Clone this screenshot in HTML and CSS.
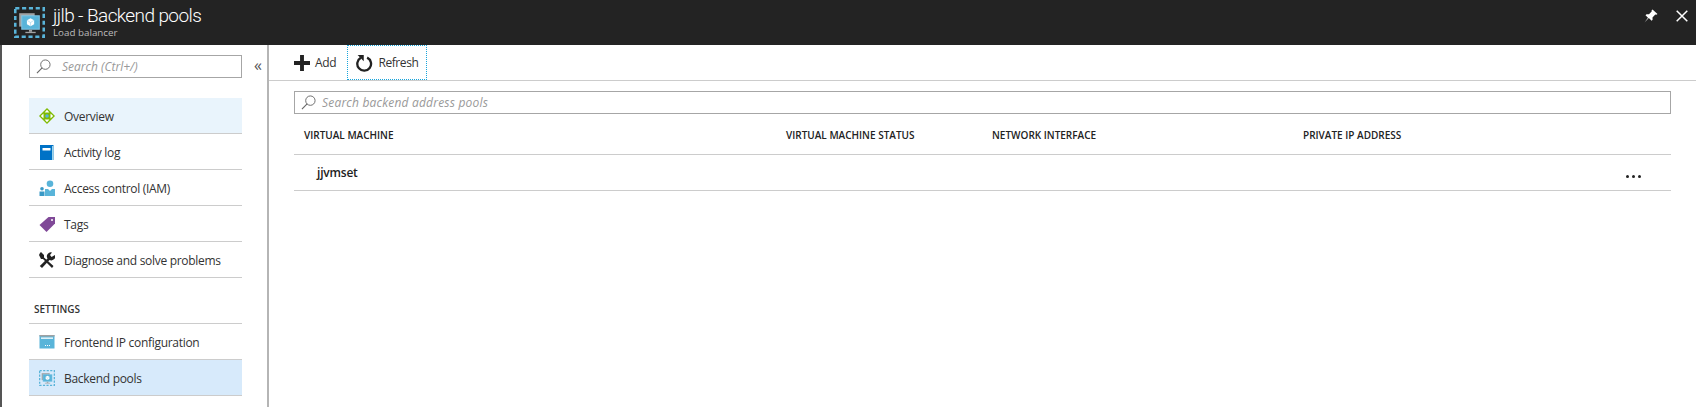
FILE: index.html
```html
<!DOCTYPE html>
<html lang="en">
<head>
    <meta charset="UTF-8">
    <title>jjlb - Backend pools</title>
    <link rel="stylesheet" href="styles.css">
</head>
<body>
    <svg class="defs" width="0" height="0">
        <symbol id="lb-icon" viewBox="0 0 30 30">
            <rect x="1.200" y="1.200" width="27.600" height="27.600" fill="none" stroke="#59b4d9" stroke-width="2.500" stroke-dasharray="4 2.600"/>
            <rect x="5" y="6" width="15" height="13" fill="#a0a1a2"/>
            <rect x="7" y="8" width="18" height="14" fill="#7fc6e6"/>
            <rect x="8" y="9" width="16" height="12" fill="#59b4d9"/>
            <path d="M16 11l3.500 1.800v4L16 18.700l-3.500-1.900v-4z" fill="#fff"/>
            <path d="M16 15v3.700M12.500 12.800L16 15l3.500-2.200" fill="none" stroke="#9fd4ea" stroke-width=".6"/>
            <rect x="14.500" y="22" width="3" height="2" fill="#a0a1a2"/>
            <rect x="11" y="24" width="10" height="1.300" fill="#a0a1a2"/>
        </symbol>
        <symbol id="search-icon" viewBox="0 0 16 16">
            <circle cx="10" cy="6" r="5" fill="none" stroke="#666" stroke-width="1"/>
            <path d="M6.500 9.500L1 15" stroke="#666" stroke-width="1.200"/>
        </symbol>
    </svg>

    <header class="topbar">
        <svg class="topbar-logo" width="31" height="31"><use href="#lb-icon"/></svg>
        <div class="topbar-titles">
            <div class="topbar-title">jjlb - Backend pools</div>
            <div class="topbar-sub">Load balancer</div>
        </div>
        <div class="topbar-actions">
            <svg width="14" height="14" viewBox="0 0 14 14">
                <path d="M8.500 0.500l5 4.500-1.200.8-1-.4-2.800 3 .1 2.400-1 1-2.800-2.800L0.500 13.500 4 8.700 1.500 6.200l1-1 2.500.1 2.800-3-.2-1z" fill="#fff"/>
            </svg>
            <svg width="12" height="12" viewBox="0 0 12 12">
                <path d="M.7.700l10.600 10.600M11.300.700L.7 11.300" stroke="#fff" stroke-width="1.500"/>
            </svg>
        </div>
    </header>

    <div class="blade">
        <aside class="side">
            <div class="side-top">
                <div class="side-search">
                    <svg width="15" height="15"><use href="#search-icon"/></svg>
                    <span>Search (Ctrl+/)</span>
                </div>
                <span class="collapse">«</span>
            </div>
            <nav class="menu">
                <a class="menu-item overview">
                    <svg class="menu-icon" width="16" height="16" viewBox="0 0 16 16">
                        <path d="M8 0L16 8 8 16 0 8z" fill="#7fba00"/>
                        <path d="M8 1.800l2.400 2.700H5.600zM8 14.200l-2.400-2.700h4.800zM1.800 8l2.700-2.400v4.800zM14.200 8l-2.700 2.400V5.600z" fill="#fff"/>
                        <circle cx="8" cy="8" r="1.800" fill="#59b4d9"/>
                    </svg>
                    <span>Overview</span>
                </a>
                <a class="menu-item">
                    <svg class="menu-icon" width="16" height="16" viewBox="0 0 16 16">
                        <rect x="1" y="1" width="13.500" height="15" fill="#0072c6"/>
                        <rect x="13" y="2" width="1.500" height="14" fill="#9fd4ea"/>
                        <rect x="3.500" y="4" width="8" height="2.500" fill="#fff"/>
                    </svg>
                    <span>Activity log</span>
                </a>
                <a class="menu-item">
                    <svg class="menu-icon" width="16" height="16" viewBox="0 0 16 16">
                        <circle cx="11" cy="3.800" r="3.300" fill="#59b4d9"/>
                        <path d="M6 9h3l2 2 2-2h3v7H6z" fill="#59b4d9"/>
                        <circle cx="3" cy="8.800" r="1.800" fill="#3999c6"/>
                        <path d="M.5 11.500h5V16h-5z" fill="#3999c6"/>
                    </svg>
                    <span>Access control (IAM)</span>
                </a>
                <a class="menu-item">
                    <svg class="menu-icon" width="16" height="16" viewBox="0 0 16 16">
                        <path d="M9.500 1H16v6.500L7.500 16 .5 9z" fill="#804998"/>
                        <circle cx="13" cy="4" r="1" fill="#fff"/>
                    </svg>
                    <span>Tags</span>
                </a>
                <a class="menu-item">
                    <svg class="menu-icon" width="16" height="16" viewBox="0 0 16 16">
                        <path d="M2 0l3 3v2.500l9.500 8.500-1.500 2L4 7H2L0 3 1 1z" fill="#222"/>
                        <path d="M16 3a4 4 0 0 1-5.500 5L3 16 .8 14l7.700-7.500A4 4 0 0 1 13 .5L11 3l1.500 2z" fill="#222"/>
                    </svg>
                    <span>Diagnose and solve problems</span>
                </a>
                <div class="menu-heading">SETTINGS</div>
                <a class="menu-item">
                    <svg class="menu-icon" width="16" height="16" viewBox="0 0 16 16">
                        <rect x="0.500" y="1" width="15" height="13.500" fill="#59b4d9"/>
                        <rect x="0.500" y="1" width="15" height="1.500" fill="#a0a1a2"/>
                        <rect x="2" y="3.500" width="12" height="1.300" fill="#fff"/>
                        <path d="M6 11.500h1M8 11.500h1M10 11.500h1" stroke="#fff"/>
                    </svg>
                    <span>Frontend IP configuration</span>
                </a>
                <a class="menu-item selected">
                    <svg class="menu-icon" width="16" height="16"><use href="#lb-icon"/></svg>
                    <span>Backend pools</span>
                </a>
                <a class="menu-item">
                    <svg class="menu-icon" width="16" height="16" viewBox="0 0 16 16">
                        <circle cx="8" cy="8" r="7" fill="#e6e6e6"/>
                    </svg>
                </a>
            </nav>
        </aside>

        <main class="content">
            <div class="toolbar">
                <button class="tool-btn add">
                    <svg width="16" height="16" viewBox="0 0 14 14">
                        <path d="M5.300 0h3.400v5.300H14v3.400H8.700V14H5.300V8.700H0V5.300h5.300z" fill="#222"/>
                    </svg>
                    Add
                </button>
                <button class="tool-btn refresh">
                    <svg width="17" height="18" viewBox="0 0 16 17">
                        <path d="M10.500 3.400A6.500 6.500 0 1 1 4.500 3.600" fill="none" stroke="#222" stroke-width="2.200"/>
                        <path d="M1.500 1h5.800v5.800z" fill="#222"/>
                    </svg>
                    Refresh
                </button>
            </div>
            <div class="pane">
                <div class="pool-search">
                    <svg width="15" height="15"><use href="#search-icon"/></svg>
                    <span>Search backend address pools</span>
                </div>
                <div class="grid-row grid-head">
                    <span>VIRTUAL MACHINE</span>
                    <span>VIRTUAL MACHINE STATUS</span>
                    <span>NETWORK INTERFACE</span>
                    <span>PRIVATE IP ADDRESS</span>
                </div>
                <div class="grid-row grid-item">
                    <span class="vm-name">jjvmset</span>
                    <span></span>
                    <span></span>
                    <span></span>
                    <span class="more"><i></i><i></i><i></i></span>
                </div>
            </div>
        </main>
    </div>
</body>
</html>
```

FILE: styles.css
```css
body {
    margin: 0;
    height: 407px;
    overflow: hidden;
    background: #fff;
    color: #333;
    font-family: "Open Sans", "Liberation Sans", sans-serif;
    font-size: 12px;
}

.defs {
    display: block;
    height: 0;
}

svg {
    flex: none;
}

/* top bar */
.topbar {
    display: flex;
    align-items: center;
    height: 45px;
    padding: 0 8px 0 14px;
    background: #232323;
    color: #fff;
}

.topbar-logo {
    margin-right: 8px;
}

.topbar-titles {
    flex: 1;
    margin-top: -3px;
}

.topbar-title {
    font-family: Roboto, sans-serif;
    font-size: 19px;
    font-weight: 300;
    letter-spacing: -0.6px;
    line-height: 25px;
}

.topbar-sub {
    margin-top: -1px;
    color: #bbb;
    font-size: 9.8px;
    line-height: 12px;
}

.topbar-actions {
    display: flex;
    align-items: center;
    gap: 18px;
    margin-top: -14px;
}

/* blade */
.blade {
    display: flex;
    height: 362px;
    border-left: 2px solid #555;
}

.side {
    box-sizing: border-box;
    width: 267px;
    height: 362px;
    overflow: hidden;
    padding: 10px 0 0 27px;
    border-right: 2px solid #b5b5b5;
}

.side-top {
    display: flex;
    align-items: center;
}

.side-search {
    display: flex;
    align-items: center;
    box-sizing: border-box;
    flex: none;
    width: 213px;
    height: 23px;
    padding-left: 6px;
    border: 1px solid #a6a6a6;
    color: #999;
    font-style: italic;
}

.side-search span {
    margin-left: 11px;
}

.collapse {
    margin: -3px 0 0 12px;
    color: #555;
    font-size: 16px;
    line-height: 20px;
}

.menu {
    width: 213px;
    margin-top: 20px;
}

.menu-item {
    display: flex;
    align-items: center;
    box-sizing: border-box;
    height: 36px;
    padding-left: 10px;
    border-bottom: 1px solid #ccc;
    letter-spacing: -0.3px;
    white-space: nowrap;
}

.menu-item span {
    padding-top: 2px;
}

.menu-icon {
    margin-right: 9px;
}

.overview {
    background: #e9f4fc;
}

.selected {
    background: #d7eafb;
}

.menu-heading {
    box-sizing: border-box;
    height: 46px;
    padding: 24px 0 0 5px;
    border-bottom: 1px solid #ccc;
    font-size: 10px;
    font-weight: 600;
}

/* main area */
.content {
    flex: 1;
}

.toolbar {
    display: flex;
    height: 36px;
    padding-left: 25px;
    box-sizing: border-box;
    border-bottom: 1px solid #ccc;
}

.tool-btn {
    display: flex;
    align-items: center;
    padding: 0;
    border: none;
    background: none;
    color: #333;
    font: inherit;
    letter-spacing: -0.3px;
}

.add {
    gap: 5px;
    margin-right: 11px;
}

.refresh {
    box-sizing: border-box;
    gap: 5px;
    width: 80px;
    height: 35px;
    padding-left: 8px;
    border: 1px dotted #18a5dc;
    letter-spacing: -0.4px;
}

.pane {
    width: 1377px;
    margin-left: 25px;
    padding-top: 10px;
}

.pool-search {
    display: flex;
    align-items: center;
    box-sizing: border-box;
    height: 23px;
    padding-left: 6px;
    border: 1px solid #a6a6a6;
    color: #999;
    font-style: italic;
    letter-spacing: 0.2px;
}

.pool-search span {
    margin-left: 6px;
}

.grid-row {
    display: grid;
    grid-template-columns: 482px 206px 311px 1fr 60px;
    align-items: center;
    box-sizing: border-box;
    height: 36px;
    padding-left: 10px;
    border-bottom: 1px solid #ccc;
}

.grid-head {
    height: 41px;
    padding-top: 2px;
    color: #222;
    font-size: 10px;
    font-weight: 600;
}

.vm-name {
    padding-left: 13px;
    color: #222;
    font-weight: 600;
    letter-spacing: -0.2px;
}

.more {
    display: flex;
    gap: 3px;
    margin: 8px 0 0 15px;
}

.more i {
    width: 3px;
    height: 3px;
    border-radius: 50%;
    background: #222;
}
```
